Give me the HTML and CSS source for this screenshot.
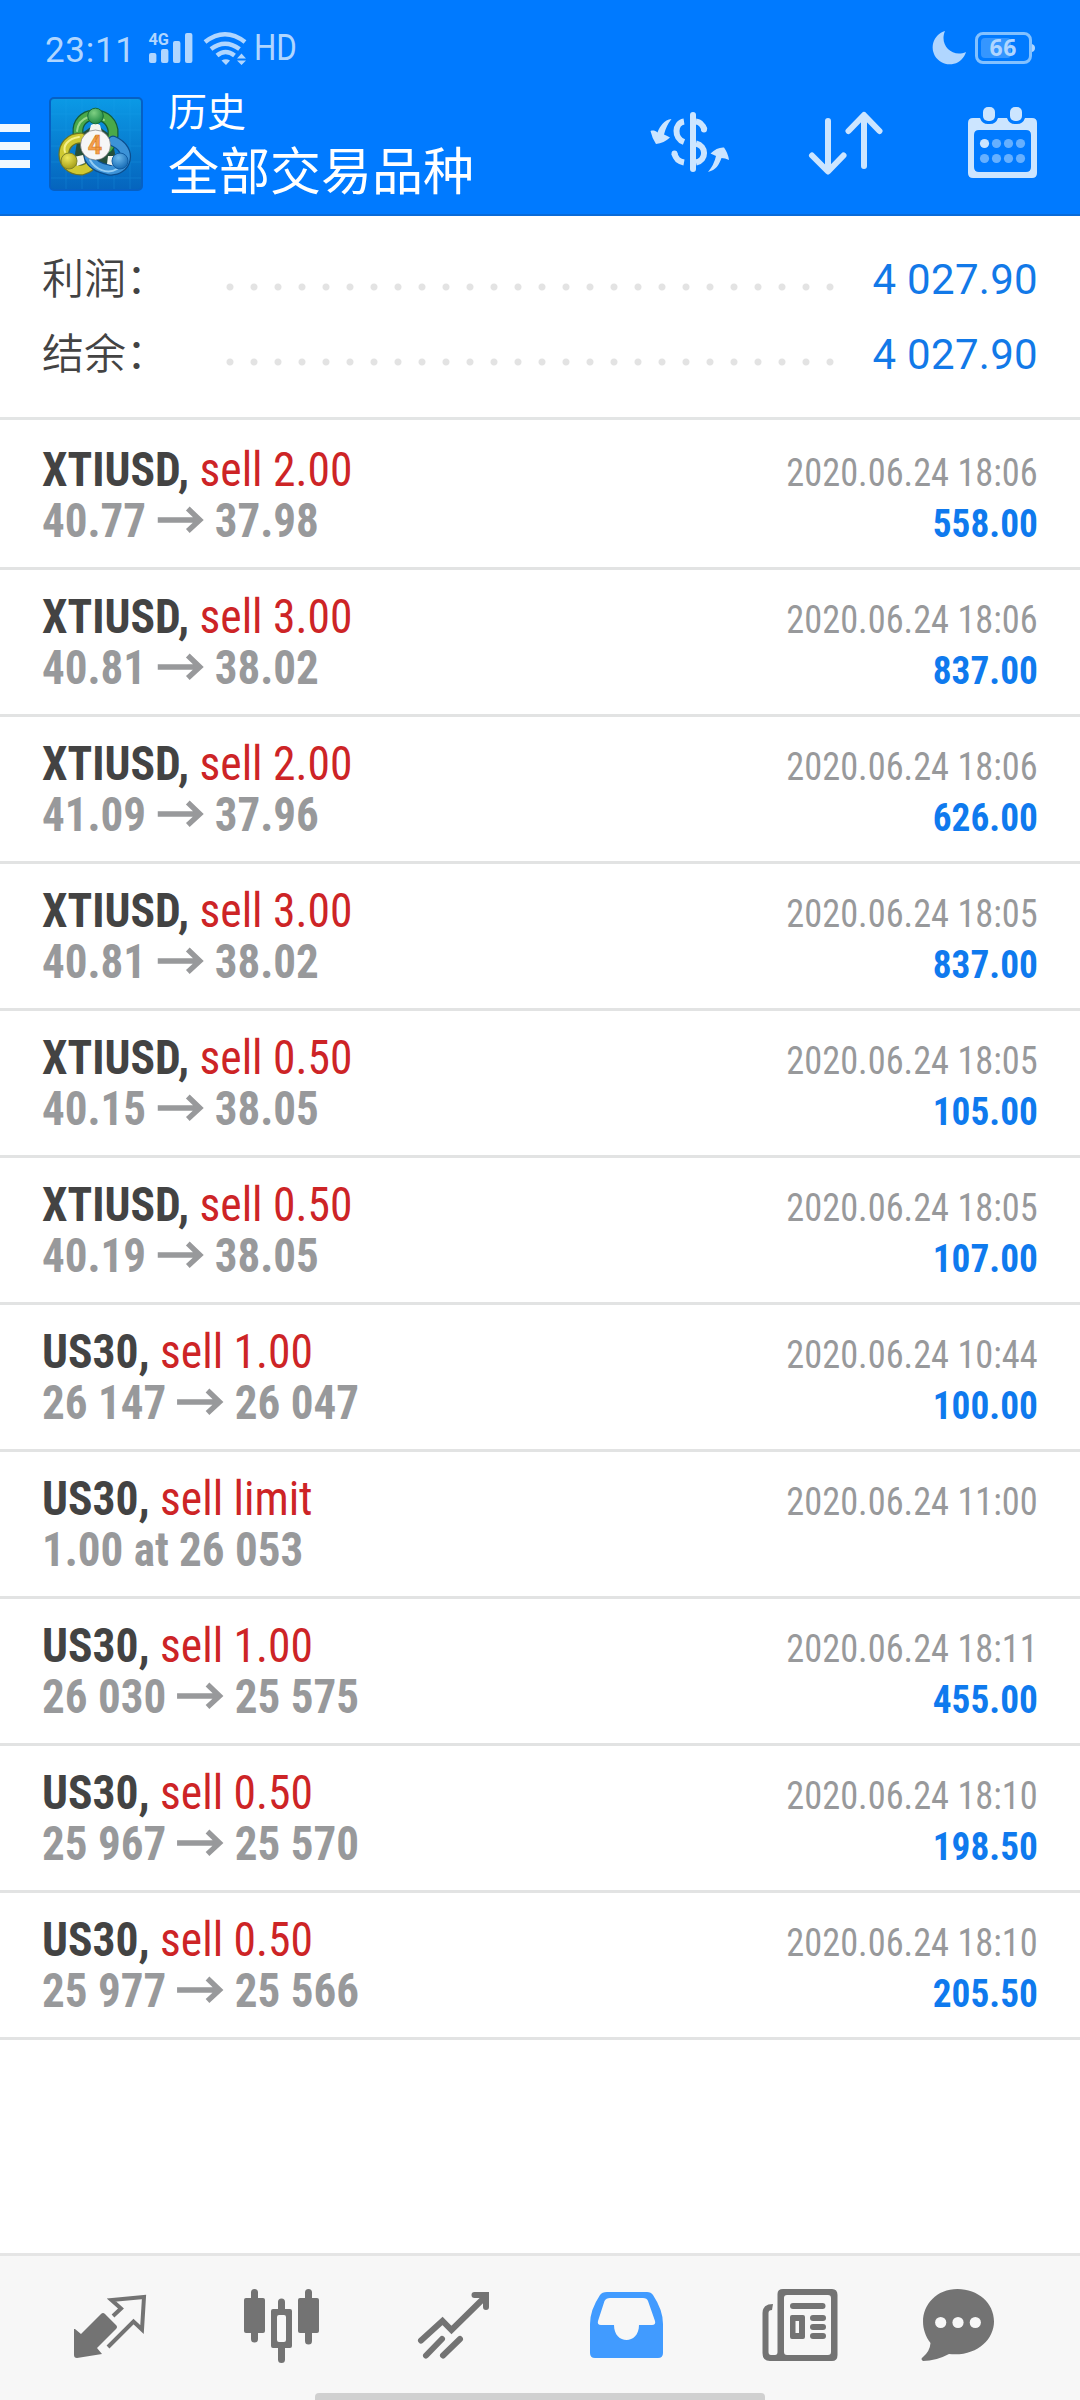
FILE: index.html
```html
<!DOCTYPE html>
<html lang="zh-CN">
<head>
<meta charset="utf-8">
<title>历史</title>
<link rel="stylesheet" href="styles.css">
</head>
<body>
<svg class="defs" width="0" height="0">
  <symbol id="arrow" viewBox="0 0 47 28" preserveAspectRatio="none"><path d="M0 15H42M30.500 3.500 42.500 15 30.500 26" fill="none" stroke="currentColor" stroke-width="5.400"/></symbol>
</svg>
<div class="screen">
  <header class="header">
    <div class="status">
      <span class="clock">23:11</span>
      <svg class="signal" width="46" height="36" viewBox="148 30 46 36">
        <text x="148.500" y="45" font-size="16" font-weight="700" textLength="20.500" lengthAdjust="spacingAndGlyphs">4G</text>
        <rect x="149" y="53" width="7.400" height="10" rx="2"/><rect x="161" y="49" width="7.400" height="14" rx="2"/><rect x="173" y="41" width="7.400" height="22" rx="2"/><rect x="185" y="33" width="7.400" height="30" rx="2"/>
      </svg>
      <svg class="wifi" width="44" height="36" viewBox="203 30 44 36">
        <g fill="none" stroke="currentColor" stroke-width="4.500"><path d="M205 42Q225 26.500 245 42"/><path d="M211 49Q225 38.500 239.500 49"/><path d="M217 55.500Q225.500 48.500 234.500 55.500"/></g>
        <path d="M221.500 60.500Q226 58 230 60.500L226 65ZM237 58.500 241.500 53.500 246 58.500ZM237 60.500H246L241.500 65Z"/>
      </svg>
      <span class="hd">HD</span>
      <svg class="power" width="106" height="36" viewBox="931 30 106 36">
        <path d="M945 31A17 17 0 1 0 966 52C952 58 939 45 945 31Z"/>
        <rect x="981" y="38" width="30" height="20" rx="4" opacity=".3"/>
        <rect x="976.500" y="33.500" width="54" height="29" rx="6.500" fill="none" stroke="#83c1ff" stroke-width="3"/>
        <path d="M1032 44Q1035 45 1035 48T1032 52Z"/>
        <text class="charge" x="1003" y="56" text-anchor="middle" textLength="27">66</text>
      </svg>
    </div>
    <div class="toolbar">
      <svg class="menu" width="30" height="44" viewBox="0 0 30 44"><path d="M0 0H30V8H0ZM0 18H30V26H0ZM0 36H30V44H0Z"/></svg>
      <svg class="logo" width="94" height="94" viewBox="49 97 94 94">
        <defs>
          <linearGradient id="sky" x1="0" y1="0" x2="0" y2="1"><stop offset="0" stop-color="#0b9ae6"/><stop offset="1" stop-color="#0564bd"/></linearGradient>
          <radialGradient id="green" cx=".4" cy=".3" r=".8"><stop offset="0" stop-color="#7fd083"/><stop offset="1" stop-color="#12803a"/></radialGradient>
          <radialGradient id="gold" cx=".4" cy=".3" r=".8"><stop offset="0" stop-color="#efe85a"/><stop offset="1" stop-color="#9b9410"/></radialGradient>
          <radialGradient id="blue" cx=".4" cy=".3" r=".8"><stop offset="0" stop-color="#6cb9ed"/><stop offset="1" stop-color="#0c62ae"/></radialGradient>
        </defs>
        <rect x="50" y="98" width="92" height="92" rx="4" fill="url(#sky)" stroke="#0660c4" stroke-width="2"/>
        <path d="M66 99V189M82 99V189M98 99V189M114 99V189M130 99V189M51 114H141M51 130H141M51 146H141M51 162H141M51 178H141" stroke="#20a5ee" stroke-width="1" opacity=".25"/>
        <path d="M95 124 112 136 116 160 95 170 74 160 78 136Z" fill="#254f3c"/>
        <g fill="none" stroke-linecap="round">
          <path d="M78 133C76 111 109 108 113 130Q114 141 108 148" stroke="#145d3a" stroke-width="11"/>
          <path d="M78 133C76 111 109 108 113 130Q114 141 108 148" stroke="#4aa94a" stroke-width="8.500"/>
          <path d="M77 131C79 116 95 113 104 120" stroke="#9ad88b" stroke-width="2"/>
          <path d="M81 138C58 138 58 171 82 170Q91 168 92 161" stroke="#6b7423" stroke-width="11"/>
          <path d="M81 138C58 138 58 171 82 170Q91 168 92 161" stroke="#cfc932" stroke-width="8.500"/>
          <path d="M79 137C67 139 63 146 65 152" stroke="#f5f08a" stroke-width="2"/>
          <path d="M113 141C134 150 126 172 109 170Q93 167 89 157" stroke="#0b4e8e" stroke-width="11"/>
          <path d="M113 141C134 150 126 172 109 170Q93 167 89 157" stroke="#3c93d8" stroke-width="8.500"/>
          <path d="M90 160C95 169 107 175 117 169" stroke="#94cdf4" stroke-width="2"/>
        </g>
        <path d="M91 125Q96 122 100 125L103 136H88ZM74 157 83 155 85 163 77 166ZM117 156 108 156 107 164 115 166Z" fill="#f2f5ee"/>
        <circle cx="95.500" cy="116" r="7.800" fill="url(#green)" stroke="#166a3b"/>
        <circle cx="69" cy="161" r="8" fill="url(#gold)" stroke="#81852b"/>
        <circle cx="120" cy="161" r="8" fill="url(#blue)" stroke="#125da3"/>
        <circle cx="95.500" cy="145" r="15" fill="#f6f6f6" stroke="#666" stroke-width=".6"/>
        <text class="four" x="95" y="154" text-anchor="middle">4</text>
      </svg>
      <div class="titles"><div class="title">历史</div><div class="subtitle">全部交易品种</div></div>
      <div class="actions">
        <svg class="currency" width="80" height="64" viewBox="650 110 80 64">
          <path d="M671.500 119C664 120 660 126 657.500 132.500 655 130.500 653 130 650.500 131Q652 138 656 144Q664 143 670 137.500 667.500 136 664 134.500 666 126 671.500 119ZM708 172C716 170 719 165 721.500 158Q725 158 729 160Q728 153 724 147.500Q717 147 710.500 153.500L716 156Q714 165 708 172Z"/>
          <g fill="none" stroke="currentColor" stroke-width="6"><path d="M684 121.500C674.500 123 673.500 138 684 142M674.500 153.500Q676 161 684 162.500M696 121.500Q702 122 704.500 130M696 143.500C706.500 146 707 160 696 162.500"/><path d="M693 115V169" stroke-linecap="round"/><path d="M704 129V129.500M674.500 153.500V154" stroke-linecap="round"/></g>
        </svg>
        <svg class="sort" width="76" height="66" viewBox="808 110 76 66"><path d="M828 121V171M812 155.500 828 171.500 843.500 155.500M864 166V115.500M848.500 131 864 115 879.500 131" fill="none" stroke="currentColor" stroke-width="6" stroke-linecap="round" stroke-linejoin="round"/></svg>
        <svg width="70" height="72" viewBox="968 107 70 72">
          <path fill-rule="evenodd" d="M973 118H980Q982 124 988 124H990Q996 124 998 118H1007Q1009 124 1015 124H1017Q1023 124 1025 118H1032Q1037 118 1037 123V173Q1037 178 1032 178H973Q968 178 968 173V123Q968 118 973 118ZM979 130Q974 130 974 135V167Q974 172 979 172H1026Q1031 172 1031 167V135Q1031 130 1026 130Z"/>
          <rect x="983" y="107" width="12" height="14" rx="5"/><rect x="1010" y="107" width="12" height="14" rx="5"/>
          <circle cx="984.500" cy="143.500" r="4.600"/>
          <g fill="#66b0ff"><circle cx="996.500" cy="143.500" r="4.600"/><circle cx="1008.500" cy="143.500" r="4.600"/><circle cx="1020.500" cy="143.500" r="4.600"/><circle cx="984.500" cy="158.500" r="4.600"/><circle cx="996.500" cy="158.500" r="4.600"/><circle cx="1008.500" cy="158.500" r="4.600"/><circle cx="1020.500" cy="158.500" r="4.600"/></g>
        </svg>
      </div>
    </div>
  </header>
  <section class="summary">
    <div class="total"><span class="label">利润：</span><span class="dots"></span><span class="sum">4 027.90</span></div>
    <div class="total"><span class="label">结余：</span><span class="dots"></span><span class="sum">4 027.90</span></div>
  </section>
  <main class="deals">
    <article class="deal"><div class="line"><span class="order"><b>XTIUSD,</b> <span class="side">sell 2.00</span></span><time>2020.06.24 18:06</time></div><div class="line"><span class="price">40.77 <svg class="arrow"><use href="#arrow"/></svg> 37.98</span><span class="profit">558.00</span></div></article>
    <article class="deal"><div class="line"><span class="order"><b>XTIUSD,</b> <span class="side">sell 3.00</span></span><time>2020.06.24 18:06</time></div><div class="line"><span class="price">40.81 <svg class="arrow"><use href="#arrow"/></svg> 38.02</span><span class="profit">837.00</span></div></article>
    <article class="deal"><div class="line"><span class="order"><b>XTIUSD,</b> <span class="side">sell 2.00</span></span><time>2020.06.24 18:06</time></div><div class="line"><span class="price">41.09 <svg class="arrow"><use href="#arrow"/></svg> 37.96</span><span class="profit">626.00</span></div></article>
    <article class="deal"><div class="line"><span class="order"><b>XTIUSD,</b> <span class="side">sell 3.00</span></span><time>2020.06.24 18:05</time></div><div class="line"><span class="price">40.81 <svg class="arrow"><use href="#arrow"/></svg> 38.02</span><span class="profit">837.00</span></div></article>
    <article class="deal"><div class="line"><span class="order"><b>XTIUSD,</b> <span class="side">sell 0.50</span></span><time>2020.06.24 18:05</time></div><div class="line"><span class="price">40.15 <svg class="arrow"><use href="#arrow"/></svg> 38.05</span><span class="profit">105.00</span></div></article>
    <article class="deal"><div class="line"><span class="order"><b>XTIUSD,</b> <span class="side">sell 0.50</span></span><time>2020.06.24 18:05</time></div><div class="line"><span class="price">40.19 <svg class="arrow"><use href="#arrow"/></svg> 38.05</span><span class="profit">107.00</span></div></article>
    <article class="deal"><div class="line"><span class="order"><b>US30,</b> <span class="side">sell 1.00</span></span><time>2020.06.24 10:44</time></div><div class="line"><span class="price">26 147 <svg class="arrow"><use href="#arrow"/></svg> 26 047</span><span class="profit">100.00</span></div></article>
    <article class="deal"><div class="line"><span class="order"><b>US30,</b> <span class="side">sell limit</span></span><time>2020.06.24 11:00</time></div><div class="line"><span class="price">1.00 at 26 053</span></div></article>
    <article class="deal"><div class="line"><span class="order"><b>US30,</b> <span class="side">sell 1.00</span></span><time>2020.06.24 18:11</time></div><div class="line"><span class="price">26 030 <svg class="arrow"><use href="#arrow"/></svg> 25 575</span><span class="profit">455.00</span></div></article>
    <article class="deal"><div class="line"><span class="order"><b>US30,</b> <span class="side">sell 0.50</span></span><time>2020.06.24 18:10</time></div><div class="line"><span class="price">25 967 <svg class="arrow"><use href="#arrow"/></svg> 25 570</span><span class="profit">198.50</span></div></article>
    <article class="deal"><div class="line"><span class="order"><b>US30,</b> <span class="side">sell 0.50</span></span><time>2020.06.24 18:10</time></div><div class="line"><span class="price">25 977 <svg class="arrow"><use href="#arrow"/></svg> 25 566</span><span class="profit">205.50</span></div></article>
  </main>
  <nav class="tabs">
    <div class="icons">
    <svg width="73" height="76" viewBox="74 2288 73 76">
      <path d="M75 2329 81 2334 101 2314Q103 2312 105 2314L116 2325Q118 2327 116 2329L97 2348 102 2354 77 2358Q74 2358 74 2355V2329Z"/>
      <path d="M113 2316 121 2308.500 111.500 2300 144 2297 142 2329.500 133.500 2321.500 108 2347" fill="none" stroke="currentColor" stroke-width="4"/>
    </svg>
    <svg width="76" height="76" viewBox="244 2288 76 76">
      <path d="M254.500 2292.500V2339M308.500 2292.500V2341M281.500 2302V2310M281.500 2347V2359.500" fill="none" stroke="currentColor" stroke-width="7" stroke-linecap="round"/>
      <rect x="244" y="2298" width="21" height="35" rx="2"/><rect x="298" y="2298" width="21" height="35" rx="2"/>
      <path fill-rule="evenodd" d="M273 2309H290Q292 2309 292 2311V2346Q292 2348 290 2348H273Q271 2348 271 2346V2311Q271 2309 273 2309ZM279 2315Q277 2315 277 2317V2340Q277 2342 279 2342H284Q286 2342 286 2340V2317Q286 2315 284 2315Z"/>
    </svg>
    <svg width="73" height="76" viewBox="417 2288 73 76"><g fill="none" stroke="currentColor" stroke-width="6" stroke-linecap="round"><path d="M421 2340.500 442.500 2321 451.500 2330 485 2297"/><path d="M474.500 2295H486V2307"/><path d="M426 2355.500 442 2339M443 2355.500 460 2339"/></g></svg>
    <svg class="active" width="73" height="76" viewBox="590 2288 73 76"><path fill-rule="evenodd" d="M607 2292H647Q651 2292 653 2295Q663 2310 663 2324V2353Q663 2358 658 2358H595Q590 2358 590 2353V2324Q590 2310 600 2295Q602 2292 607 2292ZM610 2298Q606 2298 604.500 2301L598 2321Q597 2325 601 2325H614C614 2345 639 2345 639 2325H652Q656 2325 655 2321L648 2301Q647 2298 643 2298Z"/></svg>
    <svg class="news" width="76" height="76" viewBox="762 2288 76 76">
      <path fill-rule="evenodd" d="M783 2289H832Q837.500 2289 837.500 2295V2355Q837.500 2361 832 2361H770Q762.500 2361 762.500 2353V2313Q762.500 2304 773 2304L772 2310Q768.500 2310 768.500 2313V2352Q768.500 2355 771 2355H775Q777.500 2355 777.500 2352V2294Q777.500 2289 783 2289ZM787 2295Q784 2295 784 2298V2352Q784 2355 787 2355H828Q831 2355 831 2352V2298Q831 2295 828 2295Z"/>
      <rect x="790" y="2303" width="35.500" height="6" rx="3"/><rect x="810" y="2315" width="16" height="6" rx="3"/><rect x="810" y="2324" width="16" height="6" rx="3"/><rect x="810" y="2333" width="16" height="6" rx="3"/>
      <path fill-rule="evenodd" d="M792 2315H803Q805 2315 805 2317V2337Q805 2339 803 2339H792Q790 2339 790 2337V2317Q790 2315 792 2315ZM795.500 2321V2333H799V2321Z"/>
    </svg>
    <svg class="chat" width="73" height="76" viewBox="921 2288 73 76"><path d="M957.500 2289C978 2289 994 2303 994 2321.500S976 2357 949 2354Q936 2361 923 2361Q920 2359 923 2357Q930 2351 930.500 2343C913 2320 928 2289 957.500 2289Z"/><g fill="#f7f7f7"><circle cx="940.700" cy="2322.500" r="5.600"/><circle cx="958" cy="2322.500" r="5.600"/><circle cx="975.300" cy="2322.500" r="5.600"/></g></svg>
    </div>
    <div class="handle"></div>
  </nav>
</div>
</body>
</html>
```
FILE: styles.css
```css
* { box-sizing: border-box; }
body { margin: 0; background: #fff; font-family: Roboto, "Noto Sans CJK SC", sans-serif; }
svg { display: block; fill: currentColor; flex: none; }
.defs { position: absolute; }
.screen { width: 1080px; height: 2400px; display: flex; flex-direction: column; overflow: hidden; }

.header { height: 216px; background: #007aff; border-bottom: 2px solid #0a6bd8; flex: none; }
.status { height: 80px; padding: 30px 43px 0 45px; display: flex; align-items: flex-start; color: #b0d6ff; line-height: 38px; }
.clock { font-size: 35px; line-height: 41px; width: 103px; letter-spacing: .7px; font-weight: 450; }
.signal { margin-right: 9px; }
.wifi { margin-right: 7px; }
.hd { font-size: 36px; line-height: 37px; transform: scaleX(.87); transform-origin: left; }
.power { margin-left: auto; }
.charge { font: 700 23px "Noto Sans", sans-serif; }
.toolbar { height: 134px; display: flex; align-items: flex-start; color: #cce5ff; }
.menu { margin-top: 44px; color: #f0f8ff; }
.logo { margin: 17px 25px 0 19px; }
.four { font: 700 25px Roboto, sans-serif; fill: #f5a04a; stroke: #d87a22; stroke-width: .6px; }
.titles { color: #fff; font-weight: 400; padding-top: 8px; }
.title { font-size: 39px; line-height: 50px; }
.subtitle { font-size: 51px; line-height: 70px; }
.actions { margin: 27px 42px 0 auto; display: flex; }
.currency { margin: 3px 78px 0 0; }
.sort { margin: 3px 84px 0 0; }

.summary { flex: none; padding: 26px 42px 0; border-bottom: 3px solid #e3e5e5; height: 204px; }
.total { display: flex; height: 75px; line-height: 75px; font-size: 42px; }
.label { width: 176px; color: #434343; font-weight: 350; }
.dots { width: 624px; height: 8px; margin-top: 41px; background: radial-gradient(circle, #e3e3e3 3px, transparent 4px) 0 0 / 24px 8px; }
.sum { margin-left: auto; color: #1279e8; letter-spacing: .3px; }

.deals { flex: 1; padding-top: 3px; font-stretch: 75%; font-family: "Roboto Condensed", Roboto, sans-serif; }
.deal { height: 147px; padding: 21px 42px 0; border-bottom: 3px solid #e2e3e3; }
.line { height: 51px; line-height: 51px; display: flex; justify-content: space-between; align-items: baseline; font-size: 48px; color: #434343; }
.order, .price { transform: scaleX(.948); transform-origin: left; }
.side { color: #cd2426; }
.line time { font-size: 39px; color: #98999b; transform: scaleX(.932); transform-origin: right; }
.line .price { color: #98999b; font-weight: 700; transform: scaleX(.938); }
.profit { font-size: 39px; font-weight: 700; color: #0f7aee; transform: scaleX(.957); transform-origin: right; }
.arrow { display: inline-block; width: 50px; height: 28px; margin: 0 0 0 1px; vertical-align: 4px; }

.tabs { height: 147px; flex: none; border-top: 3px solid #e5e5e5; background: #f7f7f7; color: #737373; display: flex; flex-direction: column; justify-content: space-between; align-items: center; padding-top: 32px; }
.icons { width: 100%; padding-left: 74px; display: flex; gap: 97px; }
.active { color: #419bff; margin-left: 3px; }
.news { margin-left: 2px; }
.chat { margin-left: -14px; }
.handle { width: 450px; height: 7px; background: #d0d0d0; border-radius: 4px 4px 0 0; }
```
